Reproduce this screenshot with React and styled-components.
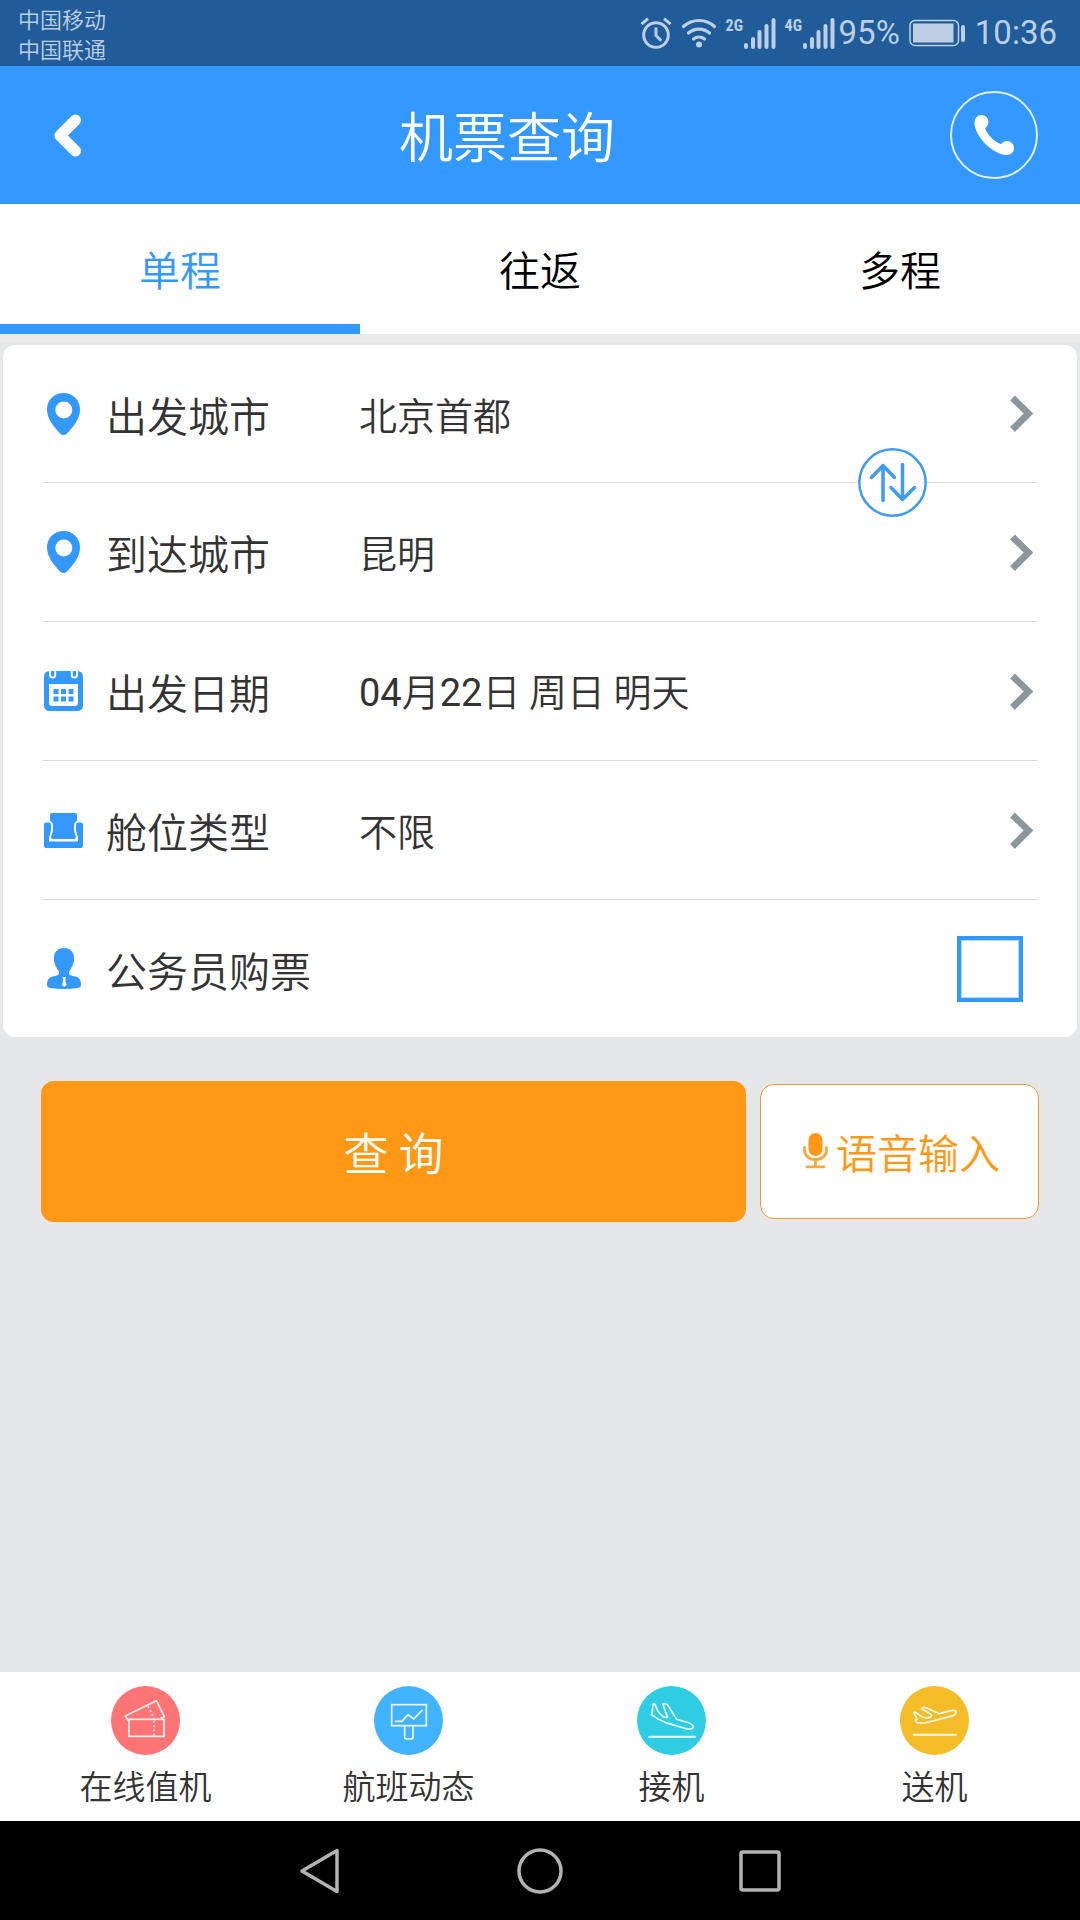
import React, { useState } from "react";
import styled, { createGlobalStyle } from "styled-components";

const GlobalStyle = createGlobalStyle`
  *, *::before, *::after { box-sizing: border-box; }
  body {
    margin: 0;
    background: #e5e7e9;
    color: #333;
    font-family: "Noto Sans CJK SC", sans-serif;
    font-weight: 350;
  }
  button, input { font: inherit; color: inherit; }
  button { border: 0; padding: 0; margin: 0; background: none; cursor: pointer; }
  svg { display: block; flex: none; }
`;

const Screen = styled.div`
  display: flex;
  flex-direction: column;
  min-height: 100vh;
`;

/* Status bar */
const StatusBar = styled.div`
  display: flex;
  align-items: center;
  justify-content: space-between;
  height: 66px;
  padding: 0 23px 0 18px;
  background: #205c99;
  color: #bccfe4;
`;
const Carriers = styled.div`
  font-size: 22px;
  line-height: 30px;
`;
const StatusIcons = styled.div`
  display: flex;
  align-items: center;
  font-family: Roboto, sans-serif;
  font-size: 33px;
  line-height: 40px;
  font-weight: 400;
`;
const Signal = styled.span`
  display: flex;
  margin-left: 9px;
`;
const Network = styled.span`
  width: 17px;
  font-size: 16px;
  line-height: 16px;
  font-weight: 700;
  font-family: "Roboto Condensed", Roboto, sans-serif;
`;
const Percent = styled.span`
  margin: 0 9px 0 4px;
`;
const Clock = styled.span`
  margin-left: 10px;
`;

/* Header */
const Header = styled.header`
  display: grid;
  grid-template-columns: 108px 1fr 174px;
  align-items: center;
  height: 138px;
  background: #3398ff;
  color: #fff;
`;
const BackButton = styled.button`
  display: flex;
  align-items: center;
  height: 100%;
  padding-left: 54px;
`;
const Title = styled.h1`
  margin: 0;
  font-size: 54px;
  line-height: 72px;
  font-weight: inherit;
  text-align: center;
`;
const PhoneButton = styled.button`
  display: grid;
  place-items: center;
  justify-self: end;
  width: 88px;
  height: 88px;
  margin-right: 42px;
  border: 2px solid #e2f1ff;
  border-radius: 50%;
`;

/* Tabs */
const Tabs = styled.div`
  display: grid;
  grid-template-columns: repeat(3, 1fr);
  background: #fff;
  border-bottom: 8px solid #ebebeb;
`;
const Tab = styled.button`
  height: 130px;
  padding-top: 8px;
  border-bottom: 10px solid ${(p) => (p.$active ? "#3398ff" : "#fff")};
  color: ${(p) => (p.$active ? "#3398ff" : "#000")};
  font-size: 41px;
  line-height: 56px;
`;

/* Search form */
const Form = styled.form`
  display: flex;
  flex-direction: column;
  flex: 1;
  padding: 3px 3px 0;
`;
const Card = styled.div`
  position: relative;
  padding: 0 40px;
  background: #fff;
  border-radius: 12px;
`;
const rowLayout = `
  display: flex;
  align-items: center;
  width: 100%;
  line-height: 56px;
  text-align: left;
  cursor: pointer;
`;
const Row = styled.button`
  ${rowLayout}
  height: 139px;
  border-bottom: 1px solid #d9dadb;
  &:first-child { height: 138px; }
`;
const CheckRow = styled.label`
  ${rowLayout}
  height: 137px;
`;
const IconSlot = styled.span`
  display: flex;
  justify-content: center;
  width: 41px;
  margin-right: 22px;
`;
const Label = styled.span`
  width: 253px;
  font-size: 41px;
`;
const Value = styled.span`
  flex: 1;
  font-size: 38px;
`;
const Digits = styled.span`
  font-family: Roboto, sans-serif;
  font-weight: 400;
`;
const ChevronSlot = styled.span`
  margin-right: 3px;
`;
const Checkbox = styled.input`
  appearance: none;
  width: 66px;
  height: 66px;
  margin: 0 14px 0 auto;
  border: 4px solid #3398ff;
  background: #fff;
  box-shadow: inset 0 0 0 1px #b5daff;
  cursor: pointer;
  &:checked { box-shadow: inset 0 0 0 10px #fff; background: #3398ff; }
`;
const SwapButton = styled.button`
  position: absolute;
  top: 103px;
  right: 150px;
`;

const Actions = styled.div`
  display: flex;
  align-items: center;
  gap: 14px;
  padding: 44px 38px;
`;
const SearchButton = styled.button`
  flex: 1;
  height: 141px;
  border-radius: 13px;
  background: #ff9915;
  color: #fff;
  font-size: 45px;
  line-height: 60px;
`;
const VoiceButton = styled.button`
  display: flex;
  align-items: center;
  justify-content: center;
  gap: 8px;
  width: 279px;
  height: 135px;
  padding: 0 0 2px 4px;
  border: 1px solid #f09a30;
  border-radius: 14px;
  background: #fff;
  color: #ff9915;
  font-size: 41px;
  line-height: 56px;
`;

/* Bottom shortcuts */
const Shortcuts = styled.nav`
  display: grid;
  grid-template-columns: repeat(4, 1fr);
  height: 149px;
  padding: 14px 14px 0;
  background: #fff;
`;
const Shortcut = styled.a`
  display: flex;
  flex-direction: column;
  align-items: center;
  gap: 7px;
  color: #333;
  font-size: 33px;
  line-height: 46px;
  text-decoration: none;
`;

/* System navigation */
const SystemNav = styled.div`
  display: flex;
  align-items: center;
  justify-content: center;
  gap: 174px;
  height: 99px;
  background: #000;
`;
const SystemButton = styled.button`
  width: 46px;
  height: 46px;
`;

const AlarmIcon = () => (
  <svg width="32" height="32" viewBox="0 0 32 32" fill="none" stroke="currentColor" strokeWidth="3">
    <circle cx="16" cy="18" r="12.3" />
    <path d="M16 10.5v8l5.2 5.2M1.5 7.2 8 1.6M30.5 7.2 24 1.6" />
  </svg>
);
const WifiIcon = () => (
  <svg width="36" height="32" viewBox="0 0 36 32" fill="none" stroke="currentColor" strokeWidth="3.2" strokeLinecap="round">
    <path d="M2.5 9.5a23 23 0 0 1 31 0M7.5 16a16 16 0 0 1 21 0M12.5 22a9 9 0 0 1 11 0" />
    <circle cx="18" cy="27.5" r="3" fill="currentColor" stroke="none" />
  </svg>
);
const BarsIcon = () => (
  <svg width="33" height="31" viewBox="0 0 33 31" fill="currentColor">
    <rect x="1" y="25" width="4" height="6" rx="2" />
    <rect x="8" y="19" width="4" height="12" rx="2" />
    <rect x="14.5" y="12" width="4" height="19" rx="2" />
    <rect x="21.5" y="6" width="4" height="25" rx="2" />
    <rect x="28.5" y="0" width="4" height="31" rx="2" />
  </svg>
);
const BatteryIcon = () => (
  <svg width="56" height="28" viewBox="0 0 56 28">
    <rect x="1" y="1.5" width="48.5" height="25" rx="5" fill="none" stroke="currentColor" strokeWidth="1.5" />
    <rect x="4" y="4.5" width="40.5" height="19" fill="currentColor" />
    <rect x="52" y="6" width="4" height="17" rx="2" fill="currentColor" />
  </svg>
);
const BackIcon = () => (
  <svg width="28" height="46" viewBox="0 0 28 46" fill="none" stroke="#fff" strokeWidth="11" strokeLinejoin="round" strokeLinecap="round">
    <path d="M21.5 8 6 23.500 21.500 39" />
  </svg>
);
const PhoneIcon = () => (
  <svg width="42" height="42" viewBox="0 0 42 42" fill="#fff">
    <circle cx="8.5" cy="8" r="7" />
    <circle cx="34" cy="34" r="7" />
    <path d="M1.5 9C1.5 22 20 41 34 41L29 30.500C23 29 13 20 12 13.500Z" />
  </svg>
);
const PinIcon = () => (
  <svg width="33" height="42" viewBox="0 0 33 42">
    <path fillRule="evenodd" fill="#3398ff" d="M16.5 0C7 0 0 7 0 16.5 0 26 7 34 13 40.5q3.500 3 7 0C26 34 33 26 33 16.5 33 7 26 0 16.5 0Zm.3 8.500a8.500 8.500 0 1 1 0 17 8.500 8.500 0 0 1 0-17Z" />
  </svg>
);
const CalendarIcon = () => (
  <svg width="39" height="40" viewBox="0 0 39 40" fill="#3398ff">
    <path fillRule="evenodd" d="M6 0h27q6 0 6 6v28q0 6-6 6H6q-6 0-6-6V6q0-6 6-6ZM5 13v19q0 3 3 3h23q3 0 3-3V13Z" />
    <path d="M6 0v4a2.600 2.600 0 0 0 5.200 0V0M27.800 0v4a2.600 2.600 0 0 0 5.200 0V0" fill="none" stroke="#fff" strokeWidth="2" />
    <path d="M9.500 18h5v5h-5zM17 18h5v5h-5zM24.500 18h5v5h-5zM9.500 25.500h5v5h-5zM17 25.500h5v5h-5zM24.500 25.500h5v5h-5z" />
  </svg>
);
const SeatIcon = () => (
  <svg width="39" height="35" viewBox="0 0 39 35" fill="#3398ff">
    <path d="M8 0h23q2 0 2 2v6q-3 1-3 5v5l2 6q0 2-2 2H9q-2 0-2-2l2-6v-5q0-4-3-5V2q0-2 2-2Z" />
    <path d="M2 9.500h3q2 0 2 3v5l-2 7V28.500h29V24.500l-2-7v-5q0-3 2-3h3q2 0 2 2V33q0 2-2 2H2q-2 0-2-2V11.500q0-2 2-2Z" />
  </svg>
);
const PersonIcon = () => (
  <svg width="34" height="41" viewBox="0 0 34 41">
    <path fill="#3398ff" d="M17 0c7 0 10.500 5 10 12-.3 5-3 8.500-5 11.500-.7 3 1 4 4 4.500 6 1 8 3.500 8 8.500q0 3-3 3.500-14 2-28 0-3-.5-3-3.500C0 31.500 2 29 8 28c3-.5 4.700-1.500 4-4.500C10 20.500 7.300 17 7 12 6.500 5 10 0 17 0Z" />
    <path fill="#fff" d="M15.500 29h3.500l-.8 3 1.300 5-2.300 2-2.200-2 1.300-5z" />
  </svg>
);
const ChevronIcon = () => (
  <svg width="24" height="37" viewBox="0 0 24 37" fill="none" stroke="#8a989e" strokeWidth="6.800">
    <path d="M2.500 3 18.500 18.500 2.500 34.500" />
  </svg>
);
const SwapIcon = () => (
  <svg width="69" height="69" viewBox="0 0 69 69" fill="none" stroke="#3f9bf5" strokeWidth="3.500" strokeLinecap="round" strokeLinejoin="round">
    <circle cx="34.5" cy="34.5" r="33.2" fill="#fff" strokeWidth="2.500" />
    <path d="M25 52.500V17.500M13.500 29.500 25 17.500 36.500 29.500M44.500 16.500V51.500M33 39.500 44.500 51.500 56.500 39.500" />
  </svg>
);
const MicIcon = () => (
  <svg width="25" height="36" viewBox="0 0 25 36">
    <rect x="5.5" y="0" width="14" height="23" rx="7" fill="#ff9915" />
    <path d="M1.500 14.500v2.500c0 5 4 9.500 11 9.500s11-4.500 11-9.500v-2.500M12.500 26.500V33M4 33.800h17" fill="none" stroke="#f7a840" strokeWidth="2.800" strokeLinecap="round" />
  </svg>
);

const RoundIcon = ({ color, children }) => (
  <svg width="69" height="69" viewBox="0 0 207 207" fill="none" stroke="#fff" strokeOpacity="0.9" strokeWidth="5" strokeLinejoin="round" strokeLinecap="round">
    <circle cx="103.5" cy="103.5" r="103.5" fill={color} stroke="none" />
    {children}
  </svg>
);

const SHORTCUTS = [
  {
    name: "在线值机",
    color: "#ff7474",
    art: (
      <>
        <path d="M52 104 43 90 136 44 160 92 150 96" />
        <rect x="54" y="100" width="105" height="51" strokeLinejoin="miter" />
        <path d="M129 104v46M111 61l19 36" strokeDasharray="6 7" strokeLinecap="butt" />
      </>
    ),
  },
  {
    name: "航班动态",
    color: "#42b3ff",
    art: (
      <>
        <rect x="53" y="56" width="104" height="63" strokeLinejoin="miter" />
        <path d="M65 106H84L102 86 119 99 144 73" />
        <path d="M92 122v32q0 5 5 5h15q5 0 5-5v-32" />
      </>
    ),
  },
  {
    name: "接机",
    color: "#2fcde4",
    art: (
      <>
        <path d="M48 54 46 77 43 86Q60 99 84 109L150 129C163 131 171 126 167 119 163 108 135 106 119 100L92 57Q85 51 77 54L92 94Q78 98 62 74L54 55Q51 52 48 54Z" />
        <path d="M37 152H173" strokeWidth="6" />
      </>
    ),
  },
  {
    name: "送机",
    color: "#f4bc27",
    art: (
      <>
        <path d="M41 79 51 99 46 103 50 110 75 111 148 92C162 90 170 83 168 76 164 71 153 73 143 76L118 83 80 66Q70 62 65 68L92 84Q99 91 84 96 70 98 58 87L49 80Q44 77 41 79Z" />
        <path d="M41 146H167" strokeWidth="6" />
      </>
    ),
  },
];

const ROWS = [
  { label: "出发城市", value: "北京首都", Icon: PinIcon },
  { label: "到达城市", value: "昆明", Icon: PinIcon },
  {
    label: "出发日期",
    value: (
      <>
        <Digits>04</Digits>月<Digits>22</Digits>日 周日 明天
      </>
    ),
    Icon: CalendarIcon,
  },
  { label: "舱位类型", value: "不限", Icon: SeatIcon },
];

const TABS = ["单程", "往返", "多程"];

export default function App() {
  const [tab, setTab] = useState(0);
  const [swapped, setSwapped] = useState(false);
  const valueAt = (i) => (swapped && i < 2 ? ROWS[1 - i].value : ROWS[i].value);

  return (
    <Screen>
      <GlobalStyle />
      <StatusBar>
        <Carriers>
          <div>中国移动</div>
          <div>中国联通</div>
        </Carriers>
        <StatusIcons>
          <AlarmIcon />
          <Signal><WifiIcon /></Signal>
          <Signal><Network>2G</Network><BarsIcon /></Signal>
          <Signal><Network>4G</Network><BarsIcon /></Signal>
          <Percent>95%</Percent>
          <BatteryIcon />
          <Clock>10:36</Clock>
        </StatusIcons>
      </StatusBar>

      <Header>
        <BackButton type="button" aria-label="返回"><BackIcon /></BackButton>
        <Title>机票查询</Title>
        <PhoneButton type="button" aria-label="电话"><PhoneIcon /></PhoneButton>
      </Header>

      <Tabs role="tablist">
        {TABS.map((name, i) => (
          <Tab key={name} type="button" role="tab" aria-selected={tab === i} $active={tab === i} onClick={() => setTab(i)}>
            {name}
          </Tab>
        ))}
      </Tabs>

      <Form onSubmit={(e) => e.preventDefault()}>
        <Card>
          {ROWS.map(({ label, Icon }, i) => (
            <Row key={label} type="button">
              <IconSlot><Icon /></IconSlot>
              <Label>{label}</Label>
              <Value>{valueAt(i)}</Value>
              <ChevronSlot><ChevronIcon /></ChevronSlot>
            </Row>
          ))}
          <CheckRow htmlFor="official">
            <IconSlot><PersonIcon /></IconSlot>
            <Label>公务员购票</Label>
            <Checkbox id="official" type="checkbox" />
          </CheckRow>
          <SwapButton type="button" aria-label="交换城市" onClick={() => setSwapped(!swapped)}>
            <SwapIcon />
          </SwapButton>
        </Card>
        <Actions>
          <SearchButton type="submit">查 询</SearchButton>
          <VoiceButton type="button"><MicIcon />语音输入</VoiceButton>
        </Actions>
      </Form>

      <Shortcuts>
        {SHORTCUTS.map(({ name, color, art }) => (
          <Shortcut key={name} href="#">
            <RoundIcon color={color}>{art}</RoundIcon>
            {name}
          </Shortcut>
        ))}
      </Shortcuts>

      <SystemNav>
        <SystemButton type="button" aria-label="后退">
          <svg width="46" height="46" viewBox="0 0 46 46" fill="none" stroke="#b3b3b3" strokeWidth="3.5" strokeLinejoin="round">
            <path d="M40 2.500V43.500L5 23Z" />
          </svg>
        </SystemButton>
        <SystemButton type="button" aria-label="主屏幕">
          <svg width="46" height="46" viewBox="0 0 46 46" fill="none" stroke="#b3b3b3" strokeWidth="3.5">
            <circle cx="23" cy="23" r="21" />
          </svg>
        </SystemButton>
        <SystemButton type="button" aria-label="最近任务">
          <svg width="46" height="46" viewBox="0 0 46 46" fill="none" stroke="#b3b3b3" strokeWidth="3.5">
            <rect x="4" y="4" width="38" height="38" rx="2" />
          </svg>
        </SystemButton>
      </SystemNav>
    </Screen>
  );
}
